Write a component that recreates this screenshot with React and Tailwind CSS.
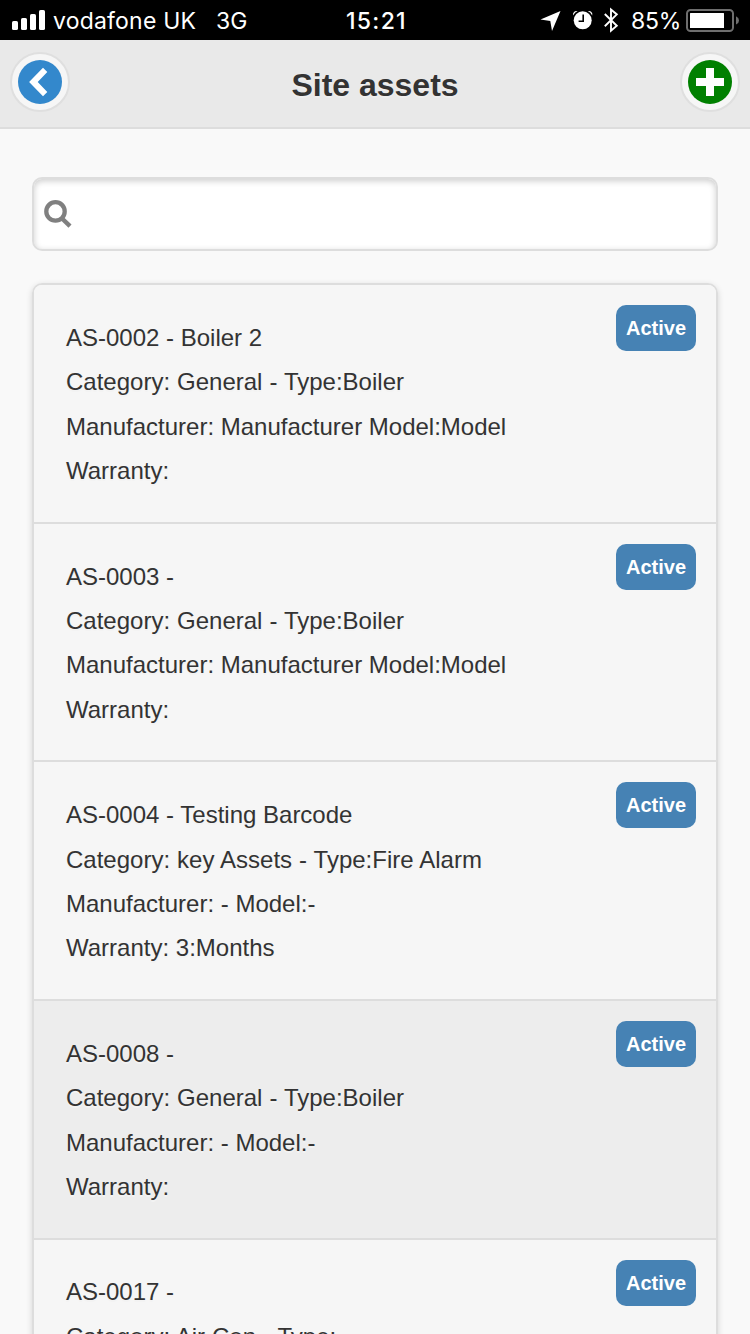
import React from 'react';

const assets = [
  {
    code: 'AS-0002',
    name: 'Boiler 2',
    category: 'General - Type:Boiler',
    manufacturer: 'Manufacturer Model:Model',
    warranty: '',
    status: 'Active',
  },
  {
    code: 'AS-0003',
    name: '',
    category: 'General - Type:Boiler',
    manufacturer: 'Manufacturer Model:Model',
    warranty: '',
    status: 'Active',
  },
  {
    code: 'AS-0004',
    name: 'Testing Barcode',
    category: 'key Assets - Type:Fire Alarm',
    manufacturer: '- Model:-',
    warranty: '3:Months',
    status: 'Active',
  },
  {
    code: 'AS-0008',
    name: '',
    category: 'General - Type:Boiler',
    manufacturer: '- Model:-',
    warranty: '',
    status: 'Active',
    pressed: true,
  },
  {
    code: 'AS-0017',
    name: '',
    category: 'Air Con - Type:',
    manufacturer: '- Model:-',
    warranty: '',
    status: 'Active',
  },
];

const StatusBar = () => (
  <div className="flex h-10 items-center bg-black pl-3 font-['Inter',sans-serif] text-[23px] leading-[38px] whitespace-nowrap text-white">
    <svg className="h-10 w-[33px] shrink-0" viewBox="0 0 33 40" fill="currentColor">
      <rect x="0" y="21" width="6" height="9" rx="1.6" />
      <rect x="9" y="18" width="6" height="12" rx="1.6" />
      <rect x="18" y="14" width="6" height="16" rx="1.6" />
      <rect x="27" y="10" width="6" height="20" rx="1.6" />
    </svg>
    <span className="ml-2 w-[163px] pt-0.5 tracking-[0.2px]">vodafone UK</span>
    <span className="w-[130px] pt-0.5">3G</span>
    <span className="w-[194px] pt-0.5 font-medium tracking-[1.3px]">15:21</span>
    <svg className="h-10 w-[22px] shrink-0" viewBox="540 0 22 40" fill="currentColor">
      <path d="M540.5 19.6 560.5 11 552 31 550.3 21Z" />
    </svg>
    <svg className="ml-2.5 h-10 w-[22px] shrink-0" viewBox="572 0 22 40" fill="none">
      <circle cx="582.7" cy="20.3" r="9" fill="currentColor" />
      <path d="M573.2 15.4q-.6-2.2.8-3.5t3.6-.8q-3 1.5-4.4 4.3ZM592.2 15.4q.6-2.2-.8-3.5t-3.6-.8q3 1.5 4.4 4.3Z" fill="currentColor" />
      <path d="M583.2 14.5v6.8h-4.6" stroke="#000" strokeWidth="1.6" />
    </svg>
    <svg className="ml-2 h-10 w-[18px] shrink-0" viewBox="602 0 18 40" fill="none" stroke="currentColor" strokeWidth="1.9">
      <path d="M604.8 14 616.8 25.8 611 30.8V9.5L616.8 14.4 604.8 26.2" />
    </svg>
    <span className="ml-[11px] w-[55px] pt-0.5 tracking-[-0.2px]">85%</span>
    <svg className="h-10 w-[54px] shrink-0" viewBox="686 0 54 40" fill="none">
      <rect x="687" y="10" width="46" height="21" rx="3.5" stroke="#6e6e6e" strokeWidth="2" />
      <rect x="690" y="13" width="34" height="15" rx="0.5" fill="currentColor" />
      <path d="M736 16.2q3 1.4 3 4.2t-3 4.2z" fill="#6e6e6e" />
    </svg>
  </div>
);

const RoundButton = ({ label, children }) => (
  <button
    aria-label={label}
    className="flex h-[60px] w-[60px] items-center justify-center rounded-full border-2 border-[#dfdfdf] bg-[#f6f6f6]"
  >
    {children}
  </button>
);

const Header = () => (
  <header className="flex h-[89px] items-start justify-between border-b-2 border-[#dddddd] bg-[#e9e9e9] px-2.5 pt-3">
    <RoundButton label="Back">
      <svg className="h-11 w-11" viewBox="0 0 44 44">
        <circle cx="22" cy="22" r="22" fill="#3388cc" />
        <path d="M11.1 22 25 7.8 29.3 12.1 19.7 22 29.3 31.9 25 36.2Z" fill="#fff" />
      </svg>
    </RoundButton>
    <h1 className="mt-[11px] text-[32px] leading-[44px] font-bold [text-shadow:0_2px_0_#eeeeee]">Site assets</h1>
    <RoundButton label="Add asset">
      <svg className="h-11 w-11" viewBox="0 0 44 44">
        <circle cx="22" cy="22" r="22" fill="#008000" />
        <path d="M18 8h8v10h10v8H26v10h-8V26H8v-8h10Z" fill="#fff" />
      </svg>
    </RoundButton>
  </header>
);

const SearchBox = () => (
  <div className="flex h-[74px] items-center rounded-[10px] border-2 border-[#dddddd] bg-white pl-2.5 shadow-[inset_0_2px_6px_rgba(0,0,0,0.2)]">
    <svg className="h-7 w-7 shrink-0" viewBox="0 0 28 28" fill="none" stroke="#808080">
      <circle cx="11.5" cy="11.4" r="9.2" strokeWidth="4.3" />
      <path d="M17.5 18 26 26.2" strokeWidth="4.4" />
    </svg>
    <input type="text" aria-label="Search assets" className="h-full flex-1 bg-transparent px-3 text-2xl outline-none" />
  </div>
);

const AssetRow = ({ asset }) => (
  <li
    className={`flex h-[238.57px] items-start justify-between border-[#dddddd] pr-5 pl-8 not-first:border-t-2 first:h-[236.57px] ${
      asset.pressed ? 'bg-[#ededed]' : 'bg-[#f6f6f6]'
    }`}
  >
    <div className="pt-[30.75px] text-2xl leading-[44.4px] whitespace-nowrap [text-shadow:0_2px_0_#f3f3f3]">
      <p>{asset.code} - {asset.name}</p>
      <p className="[word-spacing:0.3px]">Category: {asset.category}</p>
      <p>Manufacturer: {asset.manufacturer}</p>
      <p>Warranty: {asset.warranty}</p>
    </div>
    <span className="mt-5 h-[46px] rounded-[10px] bg-[#4682b4] px-2.5 text-xl leading-[46px] font-bold text-white">
      {asset.status}
    </span>
  </li>
);

const App = () => {
  return (
    <div className="h-[1334px] w-[750px] overflow-hidden bg-[#f9f9f9] font-['Liberation_Sans',Arial,sans-serif] text-[#333333]">
      <StatusBar />
      <Header />
      <main className="px-8 pt-12">
        <SearchBox />
        <ul className="mt-[32.3px] overflow-hidden rounded-[10px] border-2 border-[#dddddd] shadow-[0_2px_6px_rgba(0,0,0,0.15)]">
          {assets.map((asset) => (
            <AssetRow key={asset.code} asset={asset} />
          ))}
        </ul>
      </main>
    </div>
  );
};

export default App;
